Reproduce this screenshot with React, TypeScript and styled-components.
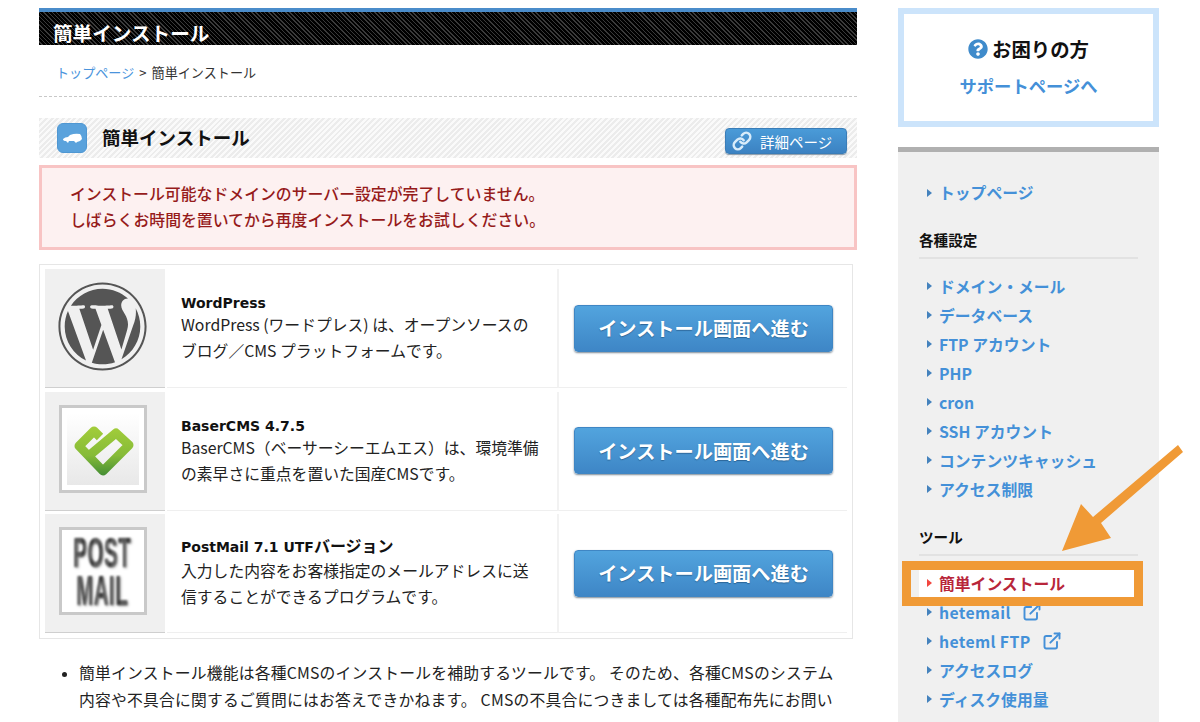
import React from 'react';
import styled, { createGlobalStyle } from 'styled-components';
import { FaWordpress, FaQuestionCircle } from 'react-icons/fa';
import { Link as LinkIcon, ExternalLink } from 'lucide-react';

const JP2 = `"Noto Sans CJK JP", "Open Sans", sans-serif`;

const Global = createGlobalStyle`
  html, body { margin: 0; padding: 0; background: #fff; }
  body { font-family: ${JP2}; color: #222; overflow: hidden; }
  a { text-decoration: none; }
  * { box-sizing: border-box; }
`;

const Page = styled.div`
  position: relative;
  width: 1200px;
  height: 722px;
  overflow: hidden;
  display: flex;
  gap: 41px;
  padding: 8px 0 0 39px;
`;

const Main = styled.main`
  width: 818px;
  flex: none;
`;

const PageHeader = styled.header`
  height: 37px;
  border-top: 4px solid #4a8cca;
  background: repeating-linear-gradient(45deg, #000 0 2px, #3a3a3a 2px 3px);
  color: #fff;
  font-size: 19.6px;
  font-weight: 700;
  line-height: 25px;
  padding: 8px 0 0 14px;
`;

const Crumbs = styled.nav`
  height: 52px;
  border-bottom: 1px dashed #c8c8c8;
  padding-left: 17px;
  font-size: 13.1px;
  line-height: 56px;
  color: #333;
  a { color: #4a94dc; }
`;

const CrumbSep = styled.span`
  margin: 0 5px;
`;

const TitleBand = styled.div`
  margin-top: 21px;
  height: 40px;
  display: flex;
  align-items: center;
  padding: 0 10px 0 18px;
  background: repeating-linear-gradient(-45deg, #ececec 0 2px, #fafafa 2px 4px);
`;

const TitleIcon = styled.span`
  width: 30px;
  height: 30px;
  border-radius: 6px;
  background: #5aa2dc;
  border: 1px solid #4f97d2;
  display: flex;
  align-items: center;
  justify-content: center;
  flex: none;
`;

const Title = styled.h1`
  margin: 0 0 2px 15px;
  font-size: 18.5px;
  font-weight: 700;
  color: #111;
  flex: 1;
`;

const DetailButton = styled.a`
  width: 122px;
  height: 26px;
  margin-top: 6px;
  border-radius: 4px;
  background: linear-gradient(#4a9bd8, #3c82c2);
  border: 1px solid #3a7db8;
  box-shadow: 0 1px 1px #8a9aa8;
  color: #fff;
  font-size: 14.5px;
  display: flex;
  align-items: center;
  padding-left: 6px;
  gap: 8px;
`;

const Alert = styled.div`
  margin-top: 7px;
  height: 85px;
  border: 3px solid #f8c4c4;
  background: #fdf1f1;
  padding: 13px 0 0 28px;
  color: #961b1b;
  font-size: 15.87px;
  font-weight: 500;
  line-height: 26px;
`;

const Card = styled.section`
  margin-top: 14px;
  width: 814px;
  height: 375px;
  border: 1px solid #e6e6e6;
  padding: 4px 5px;
  display: flex;
  flex-direction: column;
  gap: 3.5px;
`;

const Row = styled.div`
  height: 119px;
  flex: none;
  display: grid;
  grid-template-columns: 120px 394px 1fr;
`;

const Thumb = styled.div`
  background: #f0f0f0;
  border-bottom: 1px solid #cfcfcf;
  padding: 0 5px 4px 0;
  display: flex;
  align-items: center;
  justify-content: center;
  color: #555;
`;

const Frame = styled.div`
  width: 88px;
  height: 88px;
  border: 3px solid #c9c9c9;
  background: #fff;
  padding: 5px;
`;

const BaserInner = styled.div`
  width: 100%;
  height: 100%;
  background: linear-gradient(#fff, #e8e8e8);
`;

const PostInner = styled.div`
  width: 100%;
  height: 100%;
  display: flex;
  align-items: center;
  justify-content: center;
  font-family: "Liberation Sans", sans-serif;
  font-weight: 700;
  font-size: 34px;
  line-height: 30.4px;
  text-align: center;
  filter: blur(0.8px) drop-shadow(1px 1px 1px #999);
`;

const PostWord = styled.span`
  display: block;
  transform: scale(0.6, 1.25);
  letter-spacing: 1px;
  color: transparent;
  background: repeating-linear-gradient(90deg, #3c3c3c 0 2px, #777 2px 3px);
  -webkit-background-clip: text;
  background-clip: text;
`;

const Info = styled.div`
  margin-left: 2px;
  padding-left: 14px;
  border-bottom: 1px solid #efefef;
  border-right: 2px solid #f2f2f2;
  display: flex;
  flex-direction: column;
  justify-content: center;
  font-size: 15.8px;
  line-height: 26px;
  color: #222;
  white-space: nowrap;
`;

const InfoTitle = styled.strong<{ $compact: boolean }>`
  font-family: "DejaVu Sans", "Noto Sans CJK JP", sans-serif;
  font-size: 14px;
  line-height: 22px;
  margin-bottom: ${p => (p.$compact ? '-2px' : '0')};
  color: #111;
`;

const InfoTitleKana = styled.span`
  font-size: 16px;
`;

const Action = styled.div`
  border-bottom: 1px solid #efefef;
  padding-left: 15px;
  display: flex;
  align-items: center;
`;

const InstallButton = styled.a`
  width: 259px;
  height: 47px;
  border-radius: 4px;
  border: 1px solid #3f86c4;
  background: linear-gradient(#52a4de, #3e86c6);
  box-shadow: 0 1px 2px #7c8a96;
  color: #fff;
  font-size: 19.2px;
  font-weight: 700;
  text-shadow: 0 1px 1px #2d6799;
  display: flex;
  align-items: center;
  justify-content: center;
`;

const Notes = styled.ul`
  margin: 20px 0 0;
  padding: 0 0 0 40px;
  width: 797px;
  font-size: 15.8px;
  letter-spacing: 0.2px;
  line-height: 27px;
  color: #222;
  li::marker { font-size: 14px; }
`;

const Side = styled.aside`
  width: 261px;
  flex: none;
`;

const Help = styled.div`
  height: 119px;
  border: 6px solid #cce4fb;
  display: flex;
  flex-direction: column;
  align-items: center;
  padding-top: 22px;
  gap: 11px;
`;

const HelpHead = styled.div`
  display: flex;
  align-items: center;
  gap: 4px;
  font-size: 19.4px;
  font-weight: 700;
  line-height: 26px;
  color: #111;
  svg { color: #3f8bcb; }
`;

const HelpLink = styled.a`
  color: #4490d8;
  font-size: 17.3px;
  font-weight: 700;
  line-height: 26px;
`;

const Nav = styled.nav`
  margin-top: 20px;
  height: 575px;
  background: #f0f0f0;
  border-top: 5px solid #b0b0b0;
  padding: 26px 21px 0;
`;

const NavList = styled.ul`
  list-style: none;
  margin: 0;
  padding: 0;
`;

const NavItem = styled.li<{ $active?: boolean }>`
  height: 29px;
  padding-left: 8px;
  display: flex;
  align-items: center;
  background: ${p => (p.$active ? '#fff' : 'transparent')};
  color: ${p => (p.$active ? '#b8263a' : '#4490d8')};
  font-size: 15.8px;
  font-weight: 700;
  &::before {
    content: '';
    width: 0;
    height: 0;
    margin-right: 7px;
    border-left: 5px solid ${p => (p.$active ? '#f2463f' : '#4482bd')};
    border-top: 4.5px solid transparent;
    border-bottom: 4.5px solid transparent;
  }
  svg { margin-left: 11px; }
`;

const LatinLabel = styled.span`
  letter-spacing: 0.35px;
`;

const NavHeading = styled.h2`
  margin: 20px 0 12.75px;
  height: 32px;
  border-bottom: 2px solid #e2e2e2;
  font-size: 14.6px;
  font-weight: 700;
  line-height: 26px;
  color: #111;
`;

const Annotation = styled.svg`
  position: absolute;
  left: 0;
  top: 0;
  pointer-events: none;
`;

const HighlightBox = styled.div`
  position: absolute;
  left: 902px;
  top: 561px;
  width: 241px;
  height: 45px;
  border: 9px solid #f09a36;
`;

const items1 = ['ドメイン・メール', 'データベース', 'FTP アカウント', 'PHP', 'cron', 'SSH アカウント', 'コンテンツキャッシュ', 'アクセス制限'];

const products = [
  { name: 'WordPress', kana: '', compact: true, lines: ['WordPress (ワードプレス) は、オープンソースの', 'ブログ／CMS プラットフォームです。'] },
  { name: 'BaserCMS 4.7.5', kana: '', compact: true, lines: ['BaserCMS（ベーサーシーエムエス）は、環境準備', 'の素早さに重点を置いた国産CMSです。'] },
  { name: 'PostMail 7.1 UTF', kana: 'バージョン', compact: false, lines: ['入力した内容をお客様指定のメールアドレスに送', '信することができるプログラムです。'] },
];

function BaserLogo() {
  return (
    <BaserInner>
      <svg width="72" height="72" viewBox="0 0 72 72">
        <defs>
          <linearGradient id="bg" gradientUnits="userSpaceOnUse" x1="0" y1="10" x2="0" y2="64">
            <stop offset="0" stopColor="#a6cf3a" />
            <stop offset="0.6" stopColor="#86bb38" />
            <stop offset="1" stopColor="#3f8a34" />
          </linearGradient>
        </defs>
        <path
          d="M33 24 L27 18 L12 33 L36 58 L62 32 L49 20 L24 41"
          fill="none"
          stroke="url(#bg)"
          strokeWidth="9"
          strokeLinejoin="round"
        />
      </svg>
    </BaserInner>
  );
}

function PostLogo() {
  return (
    <PostInner>
      <PostWord>
        POST
        <br />
        MAIL
      </PostWord>
    </PostInner>
  );
}

const thumbs = [<FaWordpress key="w" size={91} />, <Frame key="b"><BaserLogo /></Frame>, <Frame key="p"><PostLogo /></Frame>];

export default function App() {
  return (
    <>
      <Global />
      <Page>
        <Main>
          <PageHeader>簡単インストール</PageHeader>
          <Crumbs>
            <a href="#">トップページ</a>
            <CrumbSep>&gt;</CrumbSep>簡単インストール
          </Crumbs>
          <TitleBand>
            <TitleIcon>
              <svg width="19" height="10" viewBox="0 0 19 10">
                <path d="M0 6 Q2 4 5 4 L7 2 Q12 0 17 1 Q19 3 19 6 Q17 9 14 9 L13 10 L11 8 L6 8 L5 10 L3 8 Q0 8 0 6Z" fill="#fff" />
              </svg>
            </TitleIcon>
            <Title>簡単インストール</Title>
            <DetailButton href="#">
              <LinkIcon size={20} color="#d8ecfa" strokeWidth={3} />
              詳細ページ
            </DetailButton>
          </TitleBand>
          <Alert>
            インストール可能なドメインのサーバー設定が完了していません。
            <br />
            しばらくお時間を置いてから再度インストールをお試しください。
          </Alert>
          <Card>
            {products.map((p, i) => (
              <Row key={p.name}>
                <Thumb>{thumbs[i]}</Thumb>
                <Info>
                  <InfoTitle $compact={p.compact}>
                    {p.name}
                    <InfoTitleKana>{p.kana}</InfoTitleKana>
                  </InfoTitle>
                  <span>{p.lines[0]}</span>
                  <span>{p.lines[1]}</span>
                </Info>
                <Action>
                  <InstallButton href="#">インストール画面へ進む</InstallButton>
                </Action>
              </Row>
            ))}
          </Card>
          <Notes>
            <li>
              簡単インストール機能は各種CMSのインストールを補助するツールです。 そのため、各種CMSのシステム内容や不具合に関するご質問にはお答えできかねます。 CMSの不具合につきましては各種配布先にお問い
            </li>
          </Notes>
        </Main>
        <Side>
          <Help>
            <HelpHead>
              <FaQuestionCircle size={20} />
              お困りの方
            </HelpHead>
            <HelpLink href="#">サポートページへ</HelpLink>
          </Help>
          <Nav>
            <NavList>
              <NavItem>トップページ</NavItem>
            </NavList>
            <NavHeading>各種設定</NavHeading>
            <NavList>
              {items1.map(t => (
                <NavItem key={t}>{t}</NavItem>
              ))}
            </NavList>
            <NavHeading>ツール</NavHeading>
            <NavList>
              <NavItem $active>簡単インストール</NavItem>
              <NavItem>
                <LatinLabel>hetemail</LatinLabel>
                <ExternalLink size={20} strokeWidth={2.3} />
              </NavItem>
              <NavItem>
                <LatinLabel>heteml FTP</LatinLabel>
                <ExternalLink size={20} strokeWidth={2.3} />
              </NavItem>
              <NavItem>アクセスログ</NavItem>
              <NavItem>ディスク使用量</NavItem>
            </NavList>
          </Nav>
        </Side>
        <HighlightBox />
        <Annotation width="1200" height="722" viewBox="0 0 1200 722">
          <polygon points="1178,445 1183,452 1101,523 1111,538 1062,551 1081,504 1093,517" fill="#f09a36" />
        </Annotation>
      </Page>
    </>
  );
}
